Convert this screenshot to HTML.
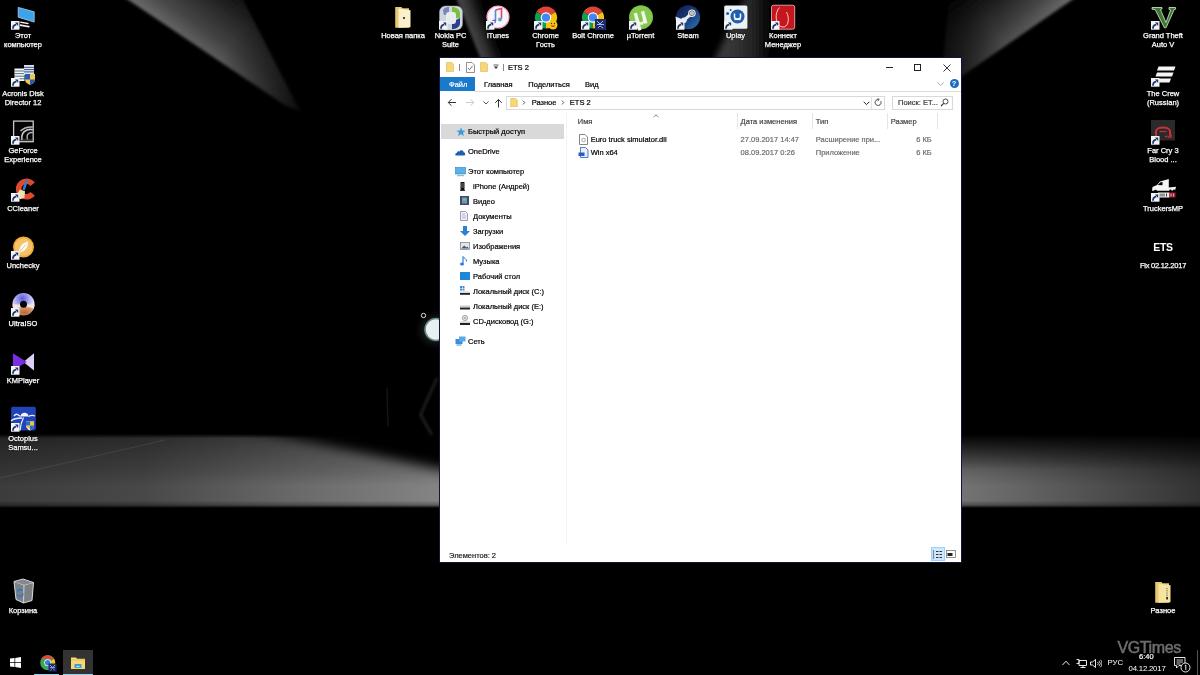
<!DOCTYPE html>
<html><head><meta charset="utf-8">
<style>
*{margin:0;padding:0;box-sizing:border-box}
html,body{width:1200px;height:675px;overflow:hidden;background:#000}
body{position:relative;font-family:"Liberation Sans",sans-serif;will-change:transform}
#bg{position:absolute;left:0;top:0}
.abs{position:absolute;white-space:nowrap}
.t{font-size:7.5px;line-height:9px;color:#000;-webkit-text-stroke:0.2px currentColor}
.win{position:absolute;background:#fff;box-shadow:0 0 0 1px #14143c}
.di{position:absolute;width:47px;text-align:center;color:#fff;font-size:7.5px;line-height:9.2px;text-shadow:0 0 1.5px #000,0 1px 1px #000;-webkit-text-stroke:0.25px #fff}
</style></head><body>
<svg id="bg" width="1200" height="675" viewBox="0 0 1200 675">
<defs>
<filter id="b1" x="-20%" y="-20%" width="140%" height="140%"><feGaussianBlur stdDeviation="1.5"/></filter>
<filter id="b3" x="-20%" y="-20%" width="140%" height="140%"><feGaussianBlur stdDeviation="3"/></filter>
<filter id="b6" x="-30%" y="-30%" width="160%" height="160%"><feGaussianBlur stdDeviation="6"/></filter>
<linearGradient id="s1" gradientUnits="userSpaceOnUse" x1="150" y1="0" x2="296" y2="108">
<stop offset="0" stop-color="#707070"/><stop offset="0.5" stop-color="#505050"/><stop offset="1" stop-color="#181818"/></linearGradient>
<linearGradient id="s1b" gradientUnits="userSpaceOnUse" x1="200" y1="0" x2="296" y2="108">
<stop offset="0" stop-color="#383838"/><stop offset="1" stop-color="#101010"/></linearGradient>
<linearGradient id="s2" gradientUnits="userSpaceOnUse" x1="1060" y1="0" x2="962" y2="76">
<stop offset="0" stop-color="#7a7a7a"/><stop offset="0.6" stop-color="#4a4a4a"/><stop offset="1" stop-color="#222"/></linearGradient>
<linearGradient id="s2b" gradientUnits="userSpaceOnUse" x1="1000" y1="0" x2="962" y2="76">
<stop offset="0" stop-color="#353535"/><stop offset="1" stop-color="#151515"/></linearGradient>
<linearGradient id="flh" x1="0" y1="0" x2="1" y2="0">
<stop offset="0" stop-color="#3c3c3c"/><stop offset="0.12" stop-color="#484848"/><stop offset="0.25" stop-color="#6a6a6a"/><stop offset="0.37" stop-color="#858585"/><stop offset="0.58" stop-color="#8a8a8a"/><stop offset="0.8" stop-color="#747474"/><stop offset="0.88" stop-color="#5a5a5a"/><stop offset="1" stop-color="#333"/></linearGradient>
<linearGradient id="flv" x1="0" y1="0" x2="0" y2="1">
<stop offset="0" stop-color="#fff" stop-opacity="0"/><stop offset="0.06" stop-color="#fff" stop-opacity="0.6"/><stop offset="0.22" stop-color="#fff" stop-opacity="0.7"/><stop offset="0.5" stop-color="#fff" stop-opacity="0.85"/><stop offset="0.7" stop-color="#fff" stop-opacity="1"/><stop offset="0.9" stop-color="#fff" stop-opacity="1"/><stop offset="0.96" stop-color="#fff" stop-opacity="0.7"/><stop offset="1" stop-color="#fff" stop-opacity="0"/></linearGradient>
<mask id="fm" maskUnits="userSpaceOnUse" x="0" y="430" width="1200" height="80"><rect x="0" y="434" width="1200" height="74" fill="url(#flv)"/></mask>
<radialGradient id="glow" cx="0.5" cy="0.5" r="0.5">
<stop offset="0" stop-color="#9ab" stop-opacity="0.6"/><stop offset="1" stop-color="#000" stop-opacity="0"/></radialGradient>
<linearGradient id="p1" gradientUnits="userSpaceOnUse" x1="207" y1="51" x2="250" y2="-16">
<stop offset="0" stop-color="#6e6e6e"/><stop offset="0.2" stop-color="#505050"/><stop offset="0.6" stop-color="#282828"/><stop offset="1" stop-color="#000"/></linearGradient>
<linearGradient id="l1" gradientUnits="userSpaceOnUse" x1="128" y1="0" x2="296" y2="108">
<stop offset="0" stop-color="#fff"/><stop offset="0.55" stop-color="#ccc"/><stop offset="1" stop-color="#222"/></linearGradient>
<mask id="m1" maskUnits="userSpaceOnUse" x="0" y="-10" width="400" height="140"><rect x="0" y="-10" width="400" height="140" fill="url(#l1)"/></mask>
<linearGradient id="p2" gradientUnits="userSpaceOnUse" x1="1016" y1="38" x2="975" y2="-20">
<stop offset="0" stop-color="#6a6a6a"/><stop offset="0.25" stop-color="#4a4a4a"/><stop offset="0.6" stop-color="#262626"/><stop offset="1" stop-color="#000"/></linearGradient>
<linearGradient id="l2" gradientUnits="userSpaceOnUse" x1="1070" y1="0" x2="962" y2="76">
<stop offset="0" stop-color="#fff"/><stop offset="0.6" stop-color="#bbb"/><stop offset="1" stop-color="#444"/></linearGradient>
<mask id="m2" maskUnits="userSpaceOnUse" x="900" y="-10" width="200" height="120"><rect x="900" y="-10" width="200" height="120" fill="url(#l2)"/></mask>
<linearGradient id="p3" gradientUnits="userSpaceOnUse" x1="468" y1="30" x2="495" y2="20">
<stop offset="0" stop-color="#4a4a4a"/><stop offset="0.4" stop-color="#2a2a2a"/><stop offset="1" stop-color="#000" stop-opacity="0"/></linearGradient>
<linearGradient id="p4" gradientUnits="userSpaceOnUse" x1="730" y1="30" x2="780" y2="30">
<stop offset="0" stop-color="#383838"/><stop offset="0.5" stop-color="#222"/><stop offset="1" stop-color="#000" stop-opacity="0"/></linearGradient>
<linearGradient id="rsh" x1="0" y1="0" x2="0" y2="1">
<stop offset="0" stop-color="#000" stop-opacity="1"/><stop offset="0.2" stop-color="#000" stop-opacity="0.85"/><stop offset="0.55" stop-color="#000" stop-opacity="0.45"/><stop offset="1" stop-color="#000" stop-opacity="0"/></linearGradient>
</defs>
<g filter="url(#b1)" mask="url(#m1)"><polygon points="121,-5 238,-10 300,111 286,106" fill="url(#p1)"/></g>
<g filter="url(#b1)" mask="url(#m2)"><polygon points="1079,-5 950,-10 940,90 962,76" fill="url(#p2)"/></g>
<g filter="url(#b1)"><polygon points="455,-5 490,-5 515,62 482,62" fill="url(#p3)"/></g>
<g filter="url(#b3)"><polygon points="746,-5 795,-5 765,62 713,62" fill="url(#p4)"/></g>
<rect x="0" y="434" width="1200" height="74" fill="url(#flh)" mask="url(#fm)"/>
<polygon points="230,425 455,425 455,472 360,452" fill="#000" filter="url(#b6)"/>
<rect x="955" y="430" width="245" height="40" fill="url(#rsh)"/>
<path d="M0 478L165 440" stroke="#777" stroke-width="0.7" opacity="0.35"/>
<path d="M437 378L420.5 415 432 435" stroke="#353535" stroke-width="1.6" fill="none" filter="url(#b1)"/>
<path d="M387 388L388 426" stroke="#141414" stroke-width="1.5" fill="none"/>
<circle cx="435" cy="330" r="22" fill="url(#glow)"/>
<circle cx="436" cy="329.5" r="11" fill="#e8f0f0" stroke="#6a8a8a" stroke-width="1.5"/>
<circle cx="423.5" cy="315.5" r="2.2" fill="none" stroke="#ddd" stroke-width="1"/>
</svg>
<svg class="abs" style="left:7.0px;top:1.5px" width="30" height="30" viewBox="0 0 30 30"><path d="M11.2 5.4L27.2 9.8V20.1L11.2 15.2z" fill="#3aa3ea" stroke="#bfe4fb" stroke-width="0.7"/><path d="M13.5 19.5l8.5 1.6-1 1.2-8-1.5zM13 22.3l10 1.6-1 1.5-9-1.5z" fill="#f0f4f8"/><g><rect x="4" y="19" width="8.5" height="8.7" fill="#f4f4f4"/><path d="M6 26.8Q5.8 23.2 9.3 22.7" fill="none" stroke="#1a3670" stroke-width="1.7"/><path d="M8 20.6h3.2v3.3z" fill="#1a3670"/></g></svg>
<div class="di" style="left:-0.5px;top:31.0px">Этот<br>компьютер</div>
<svg class="abs" style="left:7.0px;top:59.0px" width="30" height="30" viewBox="0 0 30 30"><rect x="7.5" y="9.5" width="10" height="12.5" fill="#f4f8fa"/><path d="M7.5 12h10M7.5 14.6h10M7.5 17.2h10M7.5 19.8h10" stroke="#30506a" stroke-width="0.8"/><rect x="17" y="6" width="10" height="10" fill="#dfe6f0"/><path d="M17 8.3h10M17 10.6h10M17 12.9h10" stroke="#2a3f7a" stroke-width="0.9"/><path d="M18 15h10v5.5c0 2.8-2.5 4.5-5 5.4-2.5-0.9-5-2.6-5-5.4z" fill="#f0c850"/><path d="M18 15h5v5.5h-5zM23 20.5h5c0 2.8-2.5 4.5-5 5.4z" fill="#2a5ab8"/><g><rect x="4" y="19" width="8.5" height="8.7" fill="#f4f4f4"/><path d="M6 26.8Q5.8 23.2 9.3 22.7" fill="none" stroke="#1a3670" stroke-width="1.7"/><path d="M8 20.6h3.2v3.3z" fill="#1a3670"/></g></svg>
<div class="di" style="left:-0.5px;top:88.5px">Acronis Disk<br>Director 12</div>
<svg class="abs" style="left:7.0px;top:116.5px" width="30" height="30" viewBox="0 0 30 30"><rect x="6.6" y="4.1" width="19.6" height="20.6" fill="#050505" stroke="#c8c8c8" stroke-width="1.3"/><path d="M13.5 14Q18 9.5 25.8 10" fill="none" stroke="#b8b8b8" stroke-width="1.5"/><path d="M15 23Q13.5 15.5 20 13Q23 12 25.8 12.8" fill="none" stroke="#c8c8c8" stroke-width="1.7"/><path d="M20.5 22.5Q19 17.5 22.5 15.8L25.8 15.5" fill="none" stroke="#b0b0b0" stroke-width="1.4"/><path d="M13 23h13" stroke="#777" stroke-width="0.8"/><g><rect x="4" y="19" width="8.5" height="8.7" fill="#f4f4f4"/><path d="M6 26.8Q5.8 23.2 9.3 22.7" fill="none" stroke="#1a3670" stroke-width="1.7"/><path d="M8 20.6h3.2v3.3z" fill="#1a3670"/></g></svg>
<div class="di" style="left:-0.5px;top:146.0px">GeForce<br>Experience</div>
<svg class="abs" style="left:7.0px;top:174.0px" width="30" height="30" viewBox="0 0 30 30"><path d="M25.65 10.20A7.8 7.8 0 1 0 25.65 19.80" fill="none" stroke="#e04a2c" stroke-width="5.6"/><path d="M20 6L16.5 16" stroke="#3a7cc8" stroke-width="2.4"/><path d="M13 15.5l5 1.8-0.5 6.5-4.5 1.5-3-5z" fill="#f2dfb0"/><g><rect x="4" y="19" width="8.5" height="8.7" fill="#f4f4f4"/><path d="M6 26.8Q5.8 23.2 9.3 22.7" fill="none" stroke="#1a3670" stroke-width="1.7"/><path d="M8 20.6h3.2v3.3z" fill="#1a3670"/></g></svg>
<div class="di" style="left:-0.5px;top:203.5px">CCleaner</div>
<svg class="abs" style="left:7.0px;top:231.5px" width="30" height="30" viewBox="0 0 30 30"><circle cx="16.5" cy="15" r="10.5" fill="#eeac3e"/><circle cx="16.5" cy="15" r="8.8" fill="#f6c466"/><path d="M12 20.5c0-6 3.5-10 9-11 0.5 6-3 10.5-9 11z" fill="#fcf6ea"/><path d="M12.5 20l6-7" stroke="#c8a060" stroke-width="0.5"/><g><rect x="4" y="19" width="8.5" height="8.7" fill="#f4f4f4"/><path d="M6 26.8Q5.8 23.2 9.3 22.7" fill="none" stroke="#1a3670" stroke-width="1.7"/><path d="M8 20.6h3.2v3.3z" fill="#1a3670"/></g></svg>
<div class="di" style="left:-0.5px;top:261.0px">Unchecky</div>
<svg class="abs" style="left:7.0px;top:289.0px" width="30" height="30" viewBox="0 0 30 30"><defs><radialGradient id="uig" cx="0.45" cy="0.25" r="0.6"><stop offset="0" stop-color="#5a5ae0"/><stop offset="1" stop-color="#f4f4ff"/></radialGradient><radialGradient id="uib" cx="0.55" cy="0.75" r="0.6"><stop offset="0" stop-color="#b86a3a"/><stop offset="0.8" stop-color="#d89a70"/><stop offset="1" stop-color="#f4e8e0"/></radialGradient></defs><circle cx="16.5" cy="15" r="11" fill="url(#uig)"/><path d="M5.5 15.5A11 11 0 0 0 27.5 15.5z" fill="url(#uib)"/><circle cx="16.5" cy="15.3" r="3.5" fill="#050505"/><g><rect x="4" y="19" width="8.5" height="8.7" fill="#f4f4f4"/><path d="M6 26.8Q5.8 23.2 9.3 22.7" fill="none" stroke="#1a3670" stroke-width="1.7"/><path d="M8 20.6h3.2v3.3z" fill="#1a3670"/></g></svg>
<div class="di" style="left:-0.5px;top:318.5px">UltraISO</div>
<svg class="abs" style="left:7.0px;top:346.5px" width="30" height="30" viewBox="0 0 30 30"><path d="M27 6.3V23.6L16.4 14.9z" fill="#ddd0f6"/><path d="M5.9 6.3L19.8 14.9 5.9 23.6z" fill="#7a2ee0"/><g><rect x="4" y="19" width="8.5" height="8.7" fill="#f4f4f4"/><path d="M6 26.8Q5.8 23.2 9.3 22.7" fill="none" stroke="#1a3670" stroke-width="1.7"/><path d="M8 20.6h3.2v3.3z" fill="#1a3670"/></g></svg>
<div class="di" style="left:-0.5px;top:376.0px">KMPlayer</div>
<svg class="abs" style="left:7.0px;top:404.0px" width="30" height="30" viewBox="0 0 30 30"><rect x="4.1" y="2.7" width="24.7" height="23.9" rx="1.8" fill="#2243b4"/><path d="M13.5 12.5c0-5 8-5 8 0z" fill="#f2f4ff"/><path d="M13.5 12.5C11 11 9.5 8.5 7 12M21.5 12.5c2.5-1.5 4.5-1.5 6.5-0.5M15 14c-2 0-8 0-11 3M16.5 13.5c-2 4-3 8-3.5 13" fill="none" stroke="#e8ecff" stroke-width="1.3"/><path d="M19 17.5h8v4c0 2.5-2 4-4 5-2-1-4-2.5-4-5z" fill="#f2f4ff"/><path d="M23 17.5h4v4h-4zM19 21.5h4v3.5c-2-1-4-1.5-4-3.5z" fill="#f0c040"/><path d="M19 17.5h4v4h-4zM23 21.5h4c0 2.5-2 4-4 5z" fill="#2a6ac0"/><g><rect x="4" y="19" width="8.5" height="8.7" fill="#f4f4f4"/><path d="M6 26.8Q5.8 23.2 9.3 22.7" fill="none" stroke="#1a3670" stroke-width="1.7"/><path d="M8 20.6h3.2v3.3z" fill="#1a3670"/></g></svg>
<div class="di" style="left:-0.5px;top:433.5px">Octoplus<br>Samsu...</div>
<svg class="abs" style="left:7.0px;top:576.5px" width="30" height="30" viewBox="0 0 30 30"><path d="M7 4.5L16 2 26.5 5.5 25 23.5 16.5 26 9 22.5z" fill="#b4b8bc" fill-opacity="0.7" stroke="#e8ecf0" stroke-width="0.9"/><path d="M7 4.5L17 8 26.5 5.5M17 8L16.5 26" fill="none" stroke="#dfe4e8" stroke-width="0.8"/><path d="M8 5l8-2.2 9.5 3-8.5 2z" fill="#85898d"/><path d="M10.5 14.5a3 3 0 0 1 5 -1M15.8 16.5a3 3 0 0 1-3.5 3M10.3 17.5l1.5 2" fill="none" stroke="#2a78d0" stroke-width="1.8"/></svg>
<div class="di" style="left:-0.5px;top:606.0px">Корзина</div>
<svg class="abs" style="left:387.0px;top:1.5px" width="30" height="30" viewBox="0 0 30 30"><path d="M8.2 5H14.5L15.5 6.3H22V25.7H8.2z" fill="#e6c870"/><path d="M11.5 6.5L23.5 8.3V25.3L11.5 25.8z" fill="#fbf0cc"/><circle cx="17" cy="16" r="1.1" fill="#222"/></svg>
<div class="di" style="left:379.5px;top:31.0px">Новая папка</div>
<svg class="abs" style="left:434.5px;top:1.5px" width="30" height="30" viewBox="0 0 30 30"><rect x="4.5" y="4" width="23" height="24" rx="6" fill="#cfd6de" stroke="#9aa" stroke-width="0.5"/><path d="M8 9c0-3 3-4 6-4v8H9z" fill="#7a86b8"/><path d="M17 5c4 0 8 2 8 7v4h-8z" fill="#7bbf3c"/><path d="M25 16v5c0 4-4 6-8 6v-7z" fill="#2c3f8a"/><rect x="11" y="10" width="10" height="12" rx="3" fill="#e8ecf0"/><g><rect x="4" y="19" width="8.5" height="8.7" fill="#f4f4f4"/><path d="M6 26.8Q5.8 23.2 9.3 22.7" fill="none" stroke="#1a3670" stroke-width="1.7"/><path d="M8 20.6h3.2v3.3z" fill="#1a3670"/></g></svg>
<div class="di" style="left:427.0px;top:31.0px">Nokia PC<br>Suite</div>
<svg class="abs" style="left:482.0px;top:1.5px" width="30" height="30" viewBox="0 0 30 30"><circle cx="16" cy="15" r="11" fill="#f6f6f8" stroke="#f4a6c8" stroke-width="1.2"/><path d="M13.5 8l6-1.5v10" stroke="#e8436c" stroke-width="1.6" fill="none"/><path d="M13.5 8v11" stroke="#5e84d8" stroke-width="1.6"/><circle cx="12" cy="19.5" r="2" fill="#7a5cd0"/><circle cx="18" cy="17.5" r="2" fill="#5aa6e0"/><g><rect x="4" y="19" width="8.5" height="8.7" fill="#f4f4f4"/><path d="M6 26.8Q5.8 23.2 9.3 22.7" fill="none" stroke="#1a3670" stroke-width="1.7"/><path d="M8 20.6h3.2v3.3z" fill="#1a3670"/></g></svg>
<div class="di" style="left:474.5px;top:31.0px">iTunes</div>
<svg class="abs" style="left:529.5px;top:1.5px" width="30" height="30" viewBox="0 0 30 30"><path d="M16 15.5L6.47 10A11 11 0 0 1 25.53 10z" fill="#db4437"/><path d="M16 15.5L25.53 10A11 11 0 0 1 16 26.5z" fill="#f4c20d"/><path d="M16 15.5L16 26.5A11 11 0 0 1 6.47 10z" fill="#0f9d58"/><circle cx="16" cy="15.5" r="5.2" fill="#fff"/><circle cx="16" cy="15.5" r="4.1" fill="#4285f4"/><circle cx="23" cy="23" r="4.5" fill="#f5c518"/><path d="M20.5 23.5q2.5 3 5 0z" fill="#c33"/><circle cx="21.5" cy="21.5" r="0.7" fill="#333"/><circle cx="24.5" cy="21.5" r="0.7" fill="#333"/><g><rect x="4" y="19" width="8.5" height="8.7" fill="#f4f4f4"/><path d="M6 26.8Q5.8 23.2 9.3 22.7" fill="none" stroke="#1a3670" stroke-width="1.7"/><path d="M8 20.6h3.2v3.3z" fill="#1a3670"/></g></svg>
<div class="di" style="left:522.0px;top:31.0px">Chrome<br>Гость</div>
<svg class="abs" style="left:577.0px;top:1.5px" width="30" height="30" viewBox="0 0 30 30"><path d="M16 15.5L6.47 10A11 11 0 0 1 25.53 10z" fill="#db4437"/><path d="M16 15.5L25.53 10A11 11 0 0 1 16 26.5z" fill="#f4c20d"/><path d="M16 15.5L16 26.5A11 11 0 0 1 6.47 10z" fill="#0f9d58"/><circle cx="16" cy="15.5" r="5.2" fill="#fff"/><circle cx="16" cy="15.5" r="4.1" fill="#4285f4"/><rect x="18" y="17" width="11" height="11" fill="#1c2a6e"/><path d="M20 19l3 3M26 19l-3 3M21 26l2-2 3 2M20 22.5h7" stroke="#aab8f0" stroke-width="1"/><g><rect x="4" y="19" width="8.5" height="8.7" fill="#f4f4f4"/><path d="M6 26.8Q5.8 23.2 9.3 22.7" fill="none" stroke="#1a3670" stroke-width="1.7"/><path d="M8 20.6h3.2v3.3z" fill="#1a3670"/></g></svg>
<div class="di" style="left:569.5px;top:31.0px">Bolt Chrome</div>
<svg class="abs" style="left:624.5px;top:1.5px" width="30" height="30" viewBox="0 0 30 30"><circle cx="16" cy="15.3" r="12" fill="#7cbf45"/><circle cx="16" cy="15.3" r="11" fill="#86c84e"/><text x="8.5" y="22.5" font-family="Liberation Sans" font-weight="bold" font-size="24" fill="#f2f8ea" transform="rotate(-15 16 16)">µ</text><g><rect x="4" y="19" width="8.5" height="8.7" fill="#f4f4f4"/><path d="M6 26.8Q5.8 23.2 9.3 22.7" fill="none" stroke="#1a3670" stroke-width="1.7"/><path d="M8 20.6h3.2v3.3z" fill="#1a3670"/></g></svg>
<div class="di" style="left:617.0px;top:31.0px">µTorrent</div>
<svg class="abs" style="left:672.0px;top:1.5px" width="30" height="30" viewBox="0 0 30 30"><defs><linearGradient id="stg" x1="0" y1="0" x2="1" y2="1"><stop offset="0" stop-color="#111d4a"/><stop offset="0.5" stop-color="#1b3a78"/><stop offset="1" stop-color="#2b78b8"/></linearGradient></defs><circle cx="16" cy="15.3" r="12" fill="url(#stg)"/><path d="M19.9 11.2L11.9 18.3" stroke="#e8eef4" stroke-width="3"/><circle cx="19.9" cy="11.2" r="3.8" fill="#e8eef4"/><circle cx="19.9" cy="11.2" r="2.4" fill="none" stroke="#222" stroke-width="0.6"/><circle cx="19.9" cy="11.2" r="1.6" fill="#bbb"/><circle cx="11.9" cy="18.3" r="2.8" fill="#e8eef4"/><path d="M3.5 14.5L12 18v3L4 19z" fill="#e8eef4"/><g><rect x="4" y="19" width="8.5" height="8.7" fill="#f4f4f4"/><path d="M6 26.8Q5.8 23.2 9.3 22.7" fill="none" stroke="#1a3670" stroke-width="1.7"/><path d="M8 20.6h3.2v3.3z" fill="#1a3670"/></g></svg>
<div class="di" style="left:664.5px;top:31.0px">Steam</div>
<svg class="abs" style="left:719.5px;top:1.5px" width="30" height="30" viewBox="0 0 30 30"><rect x="4.2" y="3.5" width="23.2" height="23.3" rx="1.5" fill="#eef1f4"/><circle cx="17.5" cy="14.5" r="7" fill="#1f5fae"/><path d="M14.5 11.5v3.5c0 2.8 6 2.8 6 0v-3.5" fill="none" stroke="#fff" stroke-width="1.5"/><path d="M14.5 17.5h6" stroke="#fff" stroke-width="1.2"/><circle cx="7.6" cy="11.5" r="1.5" fill="#1f5fae"/><circle cx="10.6" cy="8" r="1" fill="#1f5fae"/><g><rect x="4" y="19" width="8.5" height="8.7" fill="#f4f4f4"/><path d="M6 26.8Q5.8 23.2 9.3 22.7" fill="none" stroke="#1a3670" stroke-width="1.7"/><path d="M8 20.6h3.2v3.3z" fill="#1a3670"/></g></svg>
<div class="di" style="left:712.0px;top:31.0px">Uplay</div>
<svg class="abs" style="left:767.0px;top:1.5px" width="30" height="30" viewBox="0 0 30 30"><rect x="4.5" y="3.2" width="23.2" height="24" rx="2" fill="#c4161c" stroke="#f0c0c0" stroke-width="0.8"/><path d="M12.5 5.5C7 11 8.5 23.5 15 25c6.5 1 8-8.5 4.5-15" fill="none" stroke="#ffdada" stroke-width="0.9"/><g><rect x="4" y="19" width="8.5" height="8.7" fill="#f4f4f4"/><path d="M6 26.8Q5.8 23.2 9.3 22.7" fill="none" stroke="#1a3670" stroke-width="1.7"/><path d="M8 20.6h3.2v3.3z" fill="#1a3670"/></g></svg>
<div class="di" style="left:759.5px;top:31.0px">Коннект<br>Менеджер</div>
<svg class="abs" style="left:1147.0px;top:1.5px" width="30" height="30" viewBox="0 0 30 30"><path d="M5 5.5H15V7L13.5 7.6 19 20.5 23.6 8 22 7.4V5.5H28.6V7.2L27.2 7.6 19 25.8H17.4L8.2 7.6 5 7.2z" fill="#3a7a32" stroke="#dfe8d8" stroke-width="0.8"/><g><rect x="4" y="19" width="8.5" height="8.7" fill="#f4f4f4"/><path d="M6 26.8Q5.8 23.2 9.3 22.7" fill="none" stroke="#1a3670" stroke-width="1.7"/><path d="M8 20.6h3.2v3.3z" fill="#1a3670"/></g></svg>
<div class="di" style="left:1139.5px;top:31.0px">Grand Theft<br>Auto V</div>
<svg class="abs" style="left:1147.0px;top:59.0px" width="30" height="30" viewBox="0 0 30 30"><path d="M11.5 7.5H28.5L27 11.5H10zM10 13.5H26.5L25 17.5H8.5zM11.5 19.5H24L22.5 23.5H10z" fill="#f4f4f4"/><g><rect x="4" y="19" width="8.5" height="8.7" fill="#f4f4f4"/><path d="M6 26.8Q5.8 23.2 9.3 22.7" fill="none" stroke="#1a3670" stroke-width="1.7"/><path d="M8 20.6h3.2v3.3z" fill="#1a3670"/></g></svg>
<div class="di" style="left:1139.5px;top:88.5px">The Crew<br>(Russian)</div>
<svg class="abs" style="left:1147.0px;top:116.5px" width="30" height="30" viewBox="0 0 30 30"><rect x="4" y="3" width="24" height="20.5" fill="#2a2a2a"/><path d="M9 19v-4.5c0-5.5 14-5.5 14 0V19" fill="none" stroke="#c8303a" stroke-width="2"/><path d="M12.5 14.5h7" stroke="#c8303a" stroke-width="1.2"/><path d="M18 19.5h2.5M22 17.5q3 0 2 2.5h-3" fill="none" stroke="#c8303a" stroke-width="1.3"/><g><rect x="4" y="19" width="8.5" height="8.7" fill="#f4f4f4"/><path d="M6 26.8Q5.8 23.2 9.3 22.7" fill="none" stroke="#1a3670" stroke-width="1.7"/><path d="M8 20.6h3.2v3.3z" fill="#1a3670"/></g></svg>
<div class="di" style="left:1139.5px;top:146.0px">Far Cry 3<br>Blood ...</div>
<svg class="abs" style="left:1147.0px;top:174.0px" width="30" height="30" viewBox="0 0 30 30"><path d="M5 16.8L5.5 13 10 11 13 7.5 21.8 5V13.5L29 12.8 28 16.8z" fill="#f4f4f4"/><path d="M10.8 11L13.5 8.3 15.5 8V11.2z" fill="#000"/><circle cx="8.5" cy="17" r="1.3" fill="#000"/><circle cx="23.5" cy="16.8" r="1.2" fill="#000"/><circle cx="27" cy="16.8" r="1.2" fill="#000"/><rect x="11" y="18.5" width="11.5" height="5" fill="#f0f0f0"/><path d="M13 19.5v3M15 19.5v3M17 19.5v3M19.5 19.5v3" stroke="#333" stroke-width="1"/><rect x="22.5" y="18.5" width="6" height="5" fill="#a82038"/><path d="M24 19.5v3M26.5 19.5v3" stroke="#e8b0b8" stroke-width="0.9"/><g><rect x="4" y="19" width="8.5" height="8.7" fill="#f4f4f4"/><path d="M6 26.8Q5.8 23.2 9.3 22.7" fill="none" stroke="#1a3670" stroke-width="1.7"/><path d="M8 20.6h3.2v3.3z" fill="#1a3670"/></g></svg>
<div class="di" style="left:1139.5px;top:203.5px">TruckersMP</div>
<svg class="abs" style="left:1147.0px;top:576.5px" width="30" height="30" viewBox="0 0 30 30"><path d="M8.2 5H14.5L15.5 6.3H22V25.7H8.2z" fill="#e6c870"/><path d="M11.5 6.5L23.5 8.3V25.3L11.5 25.8z" fill="#f6e4a0"/><path d="M20 11v12" stroke="#4a4a4a" stroke-width="0.9" stroke-dasharray="1 0.8"/><rect x="19.3" y="20" width="1.6" height="2.2" fill="#222"/></svg>
<div class="di" style="left:1139.5px;top:606.0px">Разное</div>
<div class="abs" style="left:1139.5px;top:240.5px;width:47px;text-align:center;color:#fff;font-weight:bold;font-size:10.5px;line-height:12px;letter-spacing:-0.3px">ETS</div>
<div class="di" style="left:1137.5px;width:51px;top:261.0px;letter-spacing:-0.25px">Fix 02.12.2017</div>
<div class="win" style="left:440px;top:58px;width:521px;height:504px"></div>
<svg class="abs" style="left:446px;top:62px" width="8" height="10" viewBox="0 0 8 10"><path d="M0.5 0.5h5l2 1.5v7.5h-7z" fill="#f5d77a" stroke="#e0b94a" stroke-width="0.6"/></svg>
<div class="abs" style="left:459px;top:64px;width:1px;height:7px;background:#888"></div>
<svg class="abs" style="left:466px;top:62px" width="9" height="11" viewBox="0 0 9 11"><path d="M0.5 0.5h5.5l2.5 2.5v7.5h-8z" fill="#fff" stroke="#777" stroke-width="0.8"/><path d="M2 6l1.6 1.8 3-4" fill="none" stroke="#555" stroke-width="0.8"/></svg>
<svg class="abs" style="left:480px;top:62px" width="8" height="10" viewBox="0 0 8 10"><path d="M0.5 0.5h5l2 1.5v7.5h-7z" fill="#f5d77a" stroke="#e0b94a" stroke-width="0.6"/></svg>
<svg class="abs" style="left:493px;top:64px" width="6" height="6" viewBox="0 0 6 6"><path d="M0.5 1h5" stroke="#333" stroke-width="0.8"/><path d="M0.8 2.5h4.4l-2.2 2.6z" fill="#333"/></svg>
<div class="abs" style="left:503px;top:64px;width:1px;height:7px;background:#888"></div>
<div class="abs t " style="left:508px;top:63.2px;font-size:7.5px;">ETS 2</div>
<div class="abs" style="left:886px;top:67px;width:7px;height:1px;background:#222"></div>
<div class="abs" style="left:914px;top:64px;width:7px;height:6.5px;border:1px solid #222"></div>
<svg class="abs" style="left:942.5px;top:63.5px" width="8" height="8" viewBox="0 0 8 8"><path d="M0.5 0.5l7 7M7.5 0.5l-7 7" stroke="#222" stroke-width="0.9"/></svg>
<div class="abs" style="left:440px;top:77px;width:35px;height:14px;background:#1979ca"></div>
<div class="abs t " style="left:449px;top:79.9px;font-size:7.5px;color:#fff;">Файл</div>
<div class="abs t " style="left:484px;top:79.9px;font-size:7.5px;">Главная</div>
<div class="abs t " style="left:528.3px;top:79.9px;font-size:7.5px;">Поделиться</div>
<div class="abs t " style="left:585px;top:79.9px;font-size:7.5px;">Вид</div>
<div class="abs" style="left:475px;top:91px;width:486px;height:1px;background:#dadbdc"></div>
<svg class="abs" style="left:937px;top:81.5px" width="7" height="4" viewBox="0 0 7 4"><path d="M0.3 0.3l3.2 3 3.2-3" fill="none" stroke="#888" stroke-width="0.7"/></svg>
<div class="abs" style="left:949.5px;top:79px;width:9px;height:9px;border-radius:50%;background:#1c6cc2;color:#fff;font-size:7.5px;font-weight:bold;line-height:9px;text-align:center">?</div>
<svg class="abs" style="left:447px;top:98px" width="10" height="9" viewBox="0 0 10 9"><path d="M9 4.5H1.5M4.5 1.2L1.2 4.5l3.3 3.3" fill="none" stroke="#333" stroke-width="1"/></svg>
<svg class="abs" style="left:465px;top:98px" width="10" height="9" viewBox="0 0 10 9"><path d="M1 4.5h7.5M5.5 1.2l3.3 3.3-3.3 3.3" fill="none" stroke="#c8c8c8" stroke-width="1"/></svg>
<svg class="abs" style="left:482.5px;top:101px" width="6" height="4" viewBox="0 0 6 4"><path d="M0.5 0.5l2.5 2.5 2.5-2.5" fill="none" stroke="#444" stroke-width="0.9"/></svg>
<svg class="abs" style="left:494px;top:98px" width="9" height="10" viewBox="0 0 9 10"><path d="M4.5 9.5V1.5M1.2 4.8l3.3-3.3 3.3 3.3" fill="none" stroke="#333" stroke-width="1"/></svg>
<div class="abs" style="left:506px;top:95.5px;width:379px;height:14px;border:1px solid #d9d9d9"></div>
<div class="abs" style="left:871px;top:96px;width:1px;height:13px;background:#e3e3e3"></div>
<svg class="abs" style="left:509.5px;top:97.5px" width="8" height="9.5" viewBox="0 0 8 10"><path d="M0.5 0.5h5l2 1.5v7.5h-7z" fill="#f5d77a" stroke="#e0b94a" stroke-width="0.6"/></svg>
<svg class="abs" style="left:522px;top:100px" width="4" height="5" viewBox="0 0 4 5"><path d="M0.8 0.5l2 2-2 2" fill="none" stroke="#333" stroke-width="0.8"/></svg>
<div class="abs t " style="left:531.7px;top:97.7px;font-size:7.5px;">Разное</div>
<svg class="abs" style="left:560.5px;top:100px" width="4" height="5" viewBox="0 0 4 5"><path d="M0.8 0.5l2 2-2 2" fill="none" stroke="#333" stroke-width="0.8"/></svg>
<div class="abs t " style="left:569.8px;top:97.7px;font-size:7.5px;">ETS 2</div>
<svg class="abs" style="left:862.5px;top:100.5px" width="7" height="5" viewBox="0 0 7 5"><path d="M0.7 0.8l2.8 2.8 2.8-2.8" fill="none" stroke="#222" stroke-width="1"/></svg>
<svg class="abs" style="left:873.5px;top:98px" width="9" height="9" viewBox="0 0 9 9"><path d="M6.8 3.2A3 3 0 1 1 4.5 1.5" fill="none" stroke="#333" stroke-width="0.9"/><path d="M3.5 0.2l1.8 1.3-1.6 1.4" fill="none" stroke="#333" stroke-width="0.8"/></svg>
<div class="abs" style="left:892px;top:95.5px;width:61px;height:14px;border:1px solid #d9d9d9"></div>
<div class="abs t " style="left:898px;top:97.7px;font-size:7.5px;color:#3a3a3a;">Поиск: ET...</div>
<svg class="abs" style="left:939.5px;top:97.5px" width="9" height="9" viewBox="0 0 9 9"><circle cx="5.5" cy="3.5" r="2.5" fill="none" stroke="#333" stroke-width="0.9"/><path d="M3.7 5.3L1 8" stroke="#333" stroke-width="1.1"/></svg>
<div class="abs" style="left:441px;top:124px;width:123px;height:14.7px;background:#d9d9d9"></div>
<div class="abs" style="left:566px;top:112px;width:1px;height:432px;background:#f3f3f3"></div>
<div class="abs" style="left:456px;top:126.5px;line-height:0"><svg width="10" height="10" viewBox="0 0 10 10"><path d="M5 0.5l1.3 3 3.2 0.2-2.5 2 0.9 3.3L5 7.2 2.1 9l0.9-3.3-2.5-2 3.2-0.2z" fill="#3d9be0"/></svg></div>
<div class="abs t " style="left:468px;top:126.9px;font-size:7.5px;">Быстрый доступ</div>
<div class="abs" style="left:455px;top:148.5px;line-height:0"><svg width="11" height="7" viewBox="0 0 11 7"><path d="M1 6.5C0 6.5 0 4 1.8 4 2 2.5 3.5 2 4.5 2.6 5.3 0.5 8.5 0.8 8.7 3.2 10.5 3.2 10.8 6.5 9 6.5z" fill="#1f5fb0"/></svg></div>
<div class="abs t " style="left:468px;top:146.9px;font-size:7.5px;">OneDrive</div>
<div class="abs" style="left:455px;top:167.0px;line-height:0"><svg width="11" height="10" viewBox="0 0 11 10"><rect x="0.5" y="0.5" width="10" height="6.5" fill="#56b4ea" stroke="#2a7fbf" stroke-width="0.6"/><rect x="2" y="8" width="7" height="1.2" fill="#9bb"/></svg></div>
<div class="abs t " style="left:468px;top:166.9px;font-size:7.5px;">Этот компьютер</div>
<div class="abs" style="left:460px;top:181.7px;line-height:0"><svg width="5" height="9" viewBox="0 0 5 9"><rect x="0.5" y="0" width="4" height="8" rx="0.6" fill="#111"/><rect x="1" y="1" width="3" height="5" fill="#444"/><rect x="0" y="8" width="5" height="1" fill="#333"/></svg></div>
<div class="abs t " style="left:473px;top:182.1px;font-size:7.5px;">iPhone (Андрей)</div>
<div class="abs" style="left:460px;top:196.0px;line-height:0"><svg width="9" height="9" viewBox="0 0 9 9"><rect x="0" y="0" width="9" height="9" fill="#3c4d72"/><rect x="2" y="1.5" width="5" height="6" fill="#7d8fb5"/><rect x="3" y="2.5" width="3" height="2" fill="#6c8"/></svg></div>
<div class="abs t " style="left:473px;top:196.9px;font-size:7.5px;">Видео</div>
<div class="abs" style="left:460px;top:210.5px;line-height:0"><svg width="8" height="10" viewBox="0 0 8 10"><path d="M0.5 0.5h5l2 2v7h-7z" fill="#eef" stroke="#778" stroke-width="0.7"/><path d="M2 3h3M2 5h4M2 7h4" stroke="#99a" stroke-width="0.6"/></svg></div>
<div class="abs t " style="left:473px;top:211.9px;font-size:7.5px;">Документы</div>
<div class="abs" style="left:460px;top:225.5px;line-height:0"><svg width="10" height="10" viewBox="0 0 10 10"><path d="M3 0h4v5h3L5 10 0 5h3z" fill="#2e80d0"/></svg></div>
<div class="abs t " style="left:473px;top:226.9px;font-size:7.5px;">Загрузки</div>
<div class="abs" style="left:460px;top:242.0px;line-height:0"><svg width="10" height="8" viewBox="0 0 10 8"><rect x="0.4" y="0.4" width="9.2" height="7.2" fill="#dfe8ef" stroke="#667" stroke-width="0.6"/><path d="M1.2 6.5l3-3 2 2 1-1 1.8 2z" fill="#456"/></svg></div>
<div class="abs t " style="left:473px;top:241.9px;font-size:7.5px;">Изображения</div>
<div class="abs" style="left:460px;top:255.5px;line-height:0"><svg width="8" height="10" viewBox="0 0 8 10"><path d="M3 0.5v6.5" stroke="#2e7fd6" stroke-width="1.2"/><ellipse cx="2" cy="8" rx="2" ry="1.6" fill="#2e7fd6"/><path d="M3 0.5c1 2 4 2 3.5 5" fill="none" stroke="#2e7fd6" stroke-width="1"/></svg></div>
<div class="abs t " style="left:473px;top:256.9px;font-size:7.5px;">Музыка</div>
<div class="abs" style="left:460px;top:272.0px;line-height:0"><svg width="10" height="8" viewBox="0 0 10 8"><rect x="0" y="0" width="10" height="8" fill="#1e88d8"/></svg></div>
<div class="abs t " style="left:473px;top:271.9px;font-size:7.5px;">Рабочий стол</div>
<div class="abs" style="left:460px;top:286.0px;line-height:0"><svg width="10" height="9" viewBox="0 0 10 9"><rect x="0" y="0" width="2" height="2" fill="#3a8fd8"/><rect x="2.5" y="0" width="2" height="2" fill="#3a8fd8"/><rect x="0" y="2.5" width="2" height="2" fill="#3a8fd8"/><rect x="2.5" y="2.5" width="2" height="2" fill="#3a8fd8"/><rect x="0" y="5.5" width="10" height="1.2" fill="#ccc"/><rect x="0" y="7" width="10" height="1.8" fill="#222"/></svg></div>
<div class="abs t " style="left:473px;top:286.9px;font-size:7.5px;">Локальный диск (C:)</div>
<div class="abs" style="left:460px;top:301.0px;line-height:0"><svg width="10" height="9" viewBox="0 0 10 9"><rect x="0" y="4.5" width="10" height="1.5" fill="#ccc"/><rect x="0" y="6.5" width="10" height="2" fill="#222"/></svg></div>
<div class="abs t " style="left:473px;top:301.9px;font-size:7.5px;">Локальный диск (E:)</div>
<div class="abs" style="left:460px;top:315.0px;line-height:0"><svg width="10" height="10" viewBox="0 0 10 10"><circle cx="5" cy="3" r="2.7" fill="#ddd" stroke="#888" stroke-width="0.6"/><circle cx="5" cy="3" r="0.8" fill="#888"/><rect x="0" y="6.5" width="10" height="1.3" fill="#ccc"/><rect x="0" y="8" width="10" height="2" fill="#222"/></svg></div>
<div class="abs t " style="left:473px;top:316.9px;font-size:7.5px;">CD-дисковод (G:)</div>
<div class="abs" style="left:455px;top:336.0px;line-height:0"><svg width="11" height="10" viewBox="0 0 11 10"><rect x="0.5" y="3" width="7" height="5" fill="#3b8ed6"/><rect x="4" y="0.5" width="6.5" height="5" fill="#5aa8e8"/><rect x="1.5" y="8.5" width="5" height="1" fill="#3b8ed6"/></svg></div>
<div class="abs t " style="left:468px;top:336.9px;font-size:7.5px;">Сеть</div>
<svg class="abs" style="left:652.5px;top:113.5px" width="6" height="4" viewBox="0 0 6 4"><path d="M0.5 3.3l2.5-2.5 2.5 2.5" fill="none" stroke="#666" stroke-width="0.8"/></svg>
<div class="abs t " style="left:577.8px;top:117.2px;font-size:7.5px;color:#444;">Имя</div>
<div class="abs" style="left:736.5px;top:113px;width:1px;height:16px;background:#e5e5e5"></div>
<div class="abs" style="left:811.5px;top:113px;width:1px;height:16px;background:#e5e5e5"></div>
<div class="abs" style="left:886.5px;top:113px;width:1px;height:16px;background:#e5e5e5"></div>
<div class="abs" style="left:936.5px;top:113px;width:1px;height:16px;background:#e5e5e5"></div>
<div class="abs t " style="left:740.6px;top:117.2px;font-size:7.5px;color:#444;">Дата изменения</div>
<div class="abs t " style="left:815.8px;top:117.2px;font-size:7.5px;color:#444;">Тип</div>
<div class="abs t " style="left:890.8px;top:117.2px;font-size:7.5px;color:#444;">Размер</div>
<svg class="abs" style="left:578.5px;top:134px" width="9" height="11" viewBox="0 0 9 11"><path d="M0.5 0.5h5.5l2.5 2.5v7.5h-8z" fill="#fff" stroke="#666" stroke-width="0.8"/><circle cx="4.5" cy="6" r="1.8" fill="none" stroke="#888" stroke-width="0.7"/></svg>
<div class="abs t " style="left:590.7px;top:135.2px;font-size:7.5px;">Euro truck simulator.dll</div>
<div class="abs t " style="left:740.6px;top:135.2px;font-size:7.5px;color:#6d6d6d;">27.09.2017 14:47</div>
<div class="abs t " style="left:815.8px;top:135.2px;font-size:7.5px;color:#6d6d6d;">Расширение при...</div>
<div class="abs t" style="right:268.3px;top:135.2px;color:#6d6d6d">6 КБ</div>
<svg class="abs" style="left:577.5px;top:147px" width="11" height="11" viewBox="0 0 11 11"><path d="M2.5 0.5h5l2.5 2.5v7.5h-7.5z" fill="#e8f0fc" stroke="#2b5cbf" stroke-width="0.8"/><rect x="0.5" y="5.5" width="6" height="3.5" fill="#2b5cbf"/></svg>
<div class="abs t " style="left:590.7px;top:148.4px;font-size:7.5px;">Win x64</div>
<div class="abs t " style="left:740.6px;top:148.4px;font-size:7.5px;color:#6d6d6d;">08.09.2017 0:26</div>
<div class="abs t " style="left:815.8px;top:148.4px;font-size:7.5px;color:#6d6d6d;">Приложение</div>
<div class="abs t" style="right:268.3px;top:148.4px;color:#6d6d6d">6 КБ</div>
<div class="abs t " style="left:449px;top:550.6px;font-size:7.5px;color:#222;">Элементов: 2</div>
<div class="abs" style="left:930.5px;top:547px;width:14px;height:14px;background:#cce8ff;border:1px solid #99d1ff"></div>
<svg class="abs" style="left:932px;top:548.5px" width="11" height="11" viewBox="0 0 11 11"><path d="M1.5 1v9" stroke="#888" stroke-width="1.2"/><path d="M4 2.5h2.5M7.5 2.5h2.5M4 5.5h2.5M7.5 5.5h2.5M4 8.5h2.5M7.5 8.5h2.5" stroke="#333" stroke-width="1"/></svg>
<svg class="abs" style="left:946px;top:549.5px" width="10" height="9" viewBox="0 0 10 9"><rect x="0.5" y="0.5" width="9" height="7" fill="#fff" stroke="#777" stroke-width="0.8"/><rect x="1.5" y="3" width="5" height="3" fill="#222"/></svg>
<svg class="abs" style="left:10px;top:657px" width="11" height="11" viewBox="0 0 11 11"><path d="M0 1.6L4.5 1v4.1H0zM5.2 0.9L11 0v5.1H5.2zM0 5.8h4.5v4.2L0 9.4zM5.2 5.8H11V11l-5.8-0.9z" fill="#fff"/></svg>
<svg class="abs" style="left:39.5px;top:655px" width="17" height="17" viewBox="0 0 17 17"><circle cx="7.7" cy="7.7" r="7.5" fill="#3aa757"/><path d="M7.7 0.2a7.5 7.5 0 0 1 6.5 3.7H7.7zM1.2 3.9A7.5 7.5 0 0 1 7.7 0.2v3.7z" fill="#e04a3a"/><path d="M14.2 3.9a7.5 7.5 0 0 1-4 10.7L7.7 7.7z" fill="#f5c518"/><circle cx="7.7" cy="7.7" r="3.4" fill="#fff"/><circle cx="7.7" cy="7.7" r="2.7" fill="#3b7de0"/><rect x="8.5" y="8.5" width="8" height="8" fill="#1c2a6e"/><path d="M10 10l2 2M15 10l-2 2M10.5 15l2-1.5 2 1.5M10 12.5h5" stroke="#aab8f0" stroke-width="0.8"/></svg>
<div class="abs" style="left:34px;top:673.5px;width:25px;height:1.5px;background:#8fd3f0"></div>
<div class="abs" style="left:62.5px;top:650px;width:30px;height:25px;background:#333"></div>
<div class="abs" style="left:62.5px;top:673.5px;width:30px;height:1.5px;background:#8fd3f0"></div>
<svg class="abs" style="left:70.5px;top:656.5px" width="14" height="12" viewBox="0 0 14 12"><path d="M0 0.5h5l1 1.2h8V12H0z" fill="#f8d775"/><rect x="0" y="2.5" width="14" height="1" fill="#e8c060"/><rect x="3.5" y="7" width="7" height="4" fill="#3b9fd3"/><rect x="5.5" y="9" width="3" height="1" fill="#bfe"/></svg>
<div class="abs" style="left:1117.5px;top:640px;font-size:16px;line-height:16px;color:#6e6e6e;letter-spacing:-0.4px;-webkit-text-stroke:0.5px #6e6e6e">VGTimes</div>
<svg class="abs" style="left:1062px;top:659.5px" width="8" height="6" viewBox="0 0 8 6"><path d="M0.5 5L4 1.2 7.5 5" fill="none" stroke="#fff" stroke-width="0.9"/></svg>
<svg class="abs" style="left:1075.5px;top:658.5px" width="11" height="9" viewBox="0 0 11 9"><path d="M3 1.5h7.5v5H3z" fill="none" stroke="#fff" stroke-width="0.9"/><path d="M4.5 8.5h5M7 6.5v2M0.5 0.5h2.5v4H0.5" fill="none" stroke="#fff" stroke-width="0.9"/></svg>
<svg class="abs" style="left:1090px;top:658.5px" width="12" height="9" viewBox="0 0 12 9"><path d="M0.5 3h2l3-2.5v8l-3-2.5h-2z" fill="none" stroke="#fff" stroke-width="0.9"/><path d="M7.5 3a2 2 0 0 1 0 3M9 1.8a3.8 3.8 0 0 1 0 5.4M10.5 0.8a5.5 5.5 0 0 1 0 7.4" fill="none" stroke="#fff" stroke-width="0.8"/></svg>
<div class="abs" style="left:1107.5px;top:657.5px;font-size:7.8px;line-height:9px;color:#fff">РУС</div>
<div class="abs" style="left:1139px;top:652.5px;font-size:7.5px;line-height:8px;color:#fff;-webkit-text-stroke:0.2px #fff">6:40</div>
<div class="abs" style="left:1128.5px;top:664px;font-size:7.8px;line-height:9px;color:#fff;letter-spacing:-0.2px">04.12.2017</div>
<svg class="abs" style="left:1173.5px;top:657px" width="17" height="16" viewBox="0 0 17 16"><path d="M0.5 0.5h10.5v8H5l-2.5 2.5V8.5H0.5z" fill="none" stroke="#fff" stroke-width="0.9"/><path d="M2.5 3h6.5M2.5 5h6.5M2.5 7h4" stroke="#fff" stroke-width="0.8"/><circle cx="11.5" cy="10.5" r="4.5" fill="#000" stroke="#fff" stroke-width="0.9"/><path d="M10.8 8.8l1-0.8v5" fill="none" stroke="#fff" stroke-width="0.9"/></svg>
<div class="abs" style="left:1197px;top:650px;width:1px;height:25px;background:#555"></div>
</body></html>
